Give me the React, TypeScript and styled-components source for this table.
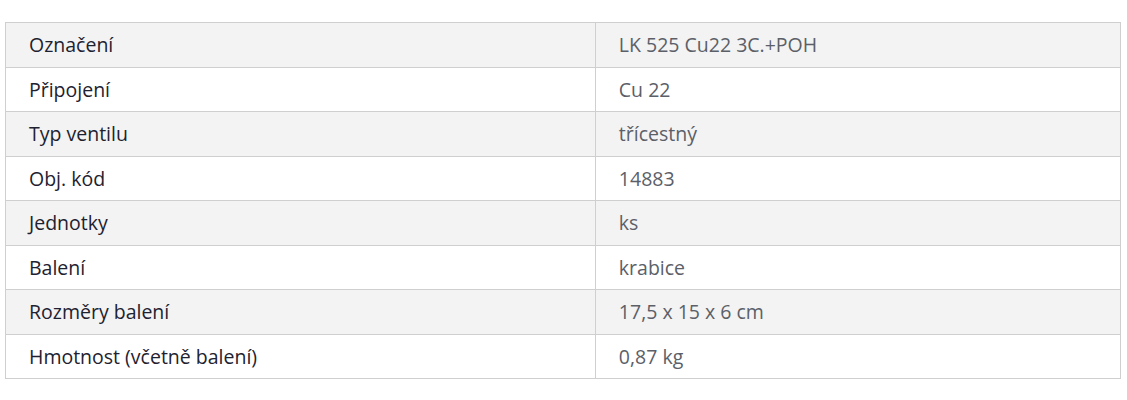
import React from "react";
import styled, { createGlobalStyle } from "styled-components";

const Global = createGlobalStyle`
  html, body { margin: 0; padding: 0; background: #fff; }
  body { font-family: "Open Sans", "Noto Sans", sans-serif; }
`;

const Page = styled.div`
  padding: 22px 6px 0 5px;
`;

const Table = styled.table`
  width: 100%;
  border-collapse: collapse;
  table-layout: fixed;
  font-size: 19.5px;
  line-height: 27.5px;
`;

const Row = styled.tr<{ $alt: boolean }>`
  background: ${(p) => (p.$alt ? "#f3f3f3" : "#ffffff")};
`;

const Cell = styled.td<{ $value?: boolean }>`
  box-sizing: border-box;
  border: 1px solid #cfcfcf;
  padding: 8px 23px;
  color: ${(p) => (p.$value ? "#5b6068" : "#1e2230")};
  vertical-align: middle;
  width: ${(p) => (p.$value ? "auto" : "52.9%")};
`;

const rows: [string, string][] = [
  ["Označení", "LK 525 Cu22 3C.+POH"],
  ["Připojení", "Cu 22"],
  ["Typ ventilu", "třícestný"],
  ["Obj. kód", "14883"],
  ["Jednotky", "ks"],
  ["Balení", "krabice"],
  ["Rozměry balení", "17,5 x 15 x 6 cm"],
  ["Hmotnost (včetně balení)", "0,87 kg"],
];

export default function App() {
  return (
    <>
      <Global />
      <Page>
        <Table>
          <tbody>
            {rows.map(([k, v], i) => (
              <Row key={k} $alt={i % 2 === 0}>
                <Cell>{k}</Cell>
                <Cell $value>{v}</Cell>
              </Row>
            ))}
          </tbody>
        </Table>
      </Page>
    </>
  );
}
